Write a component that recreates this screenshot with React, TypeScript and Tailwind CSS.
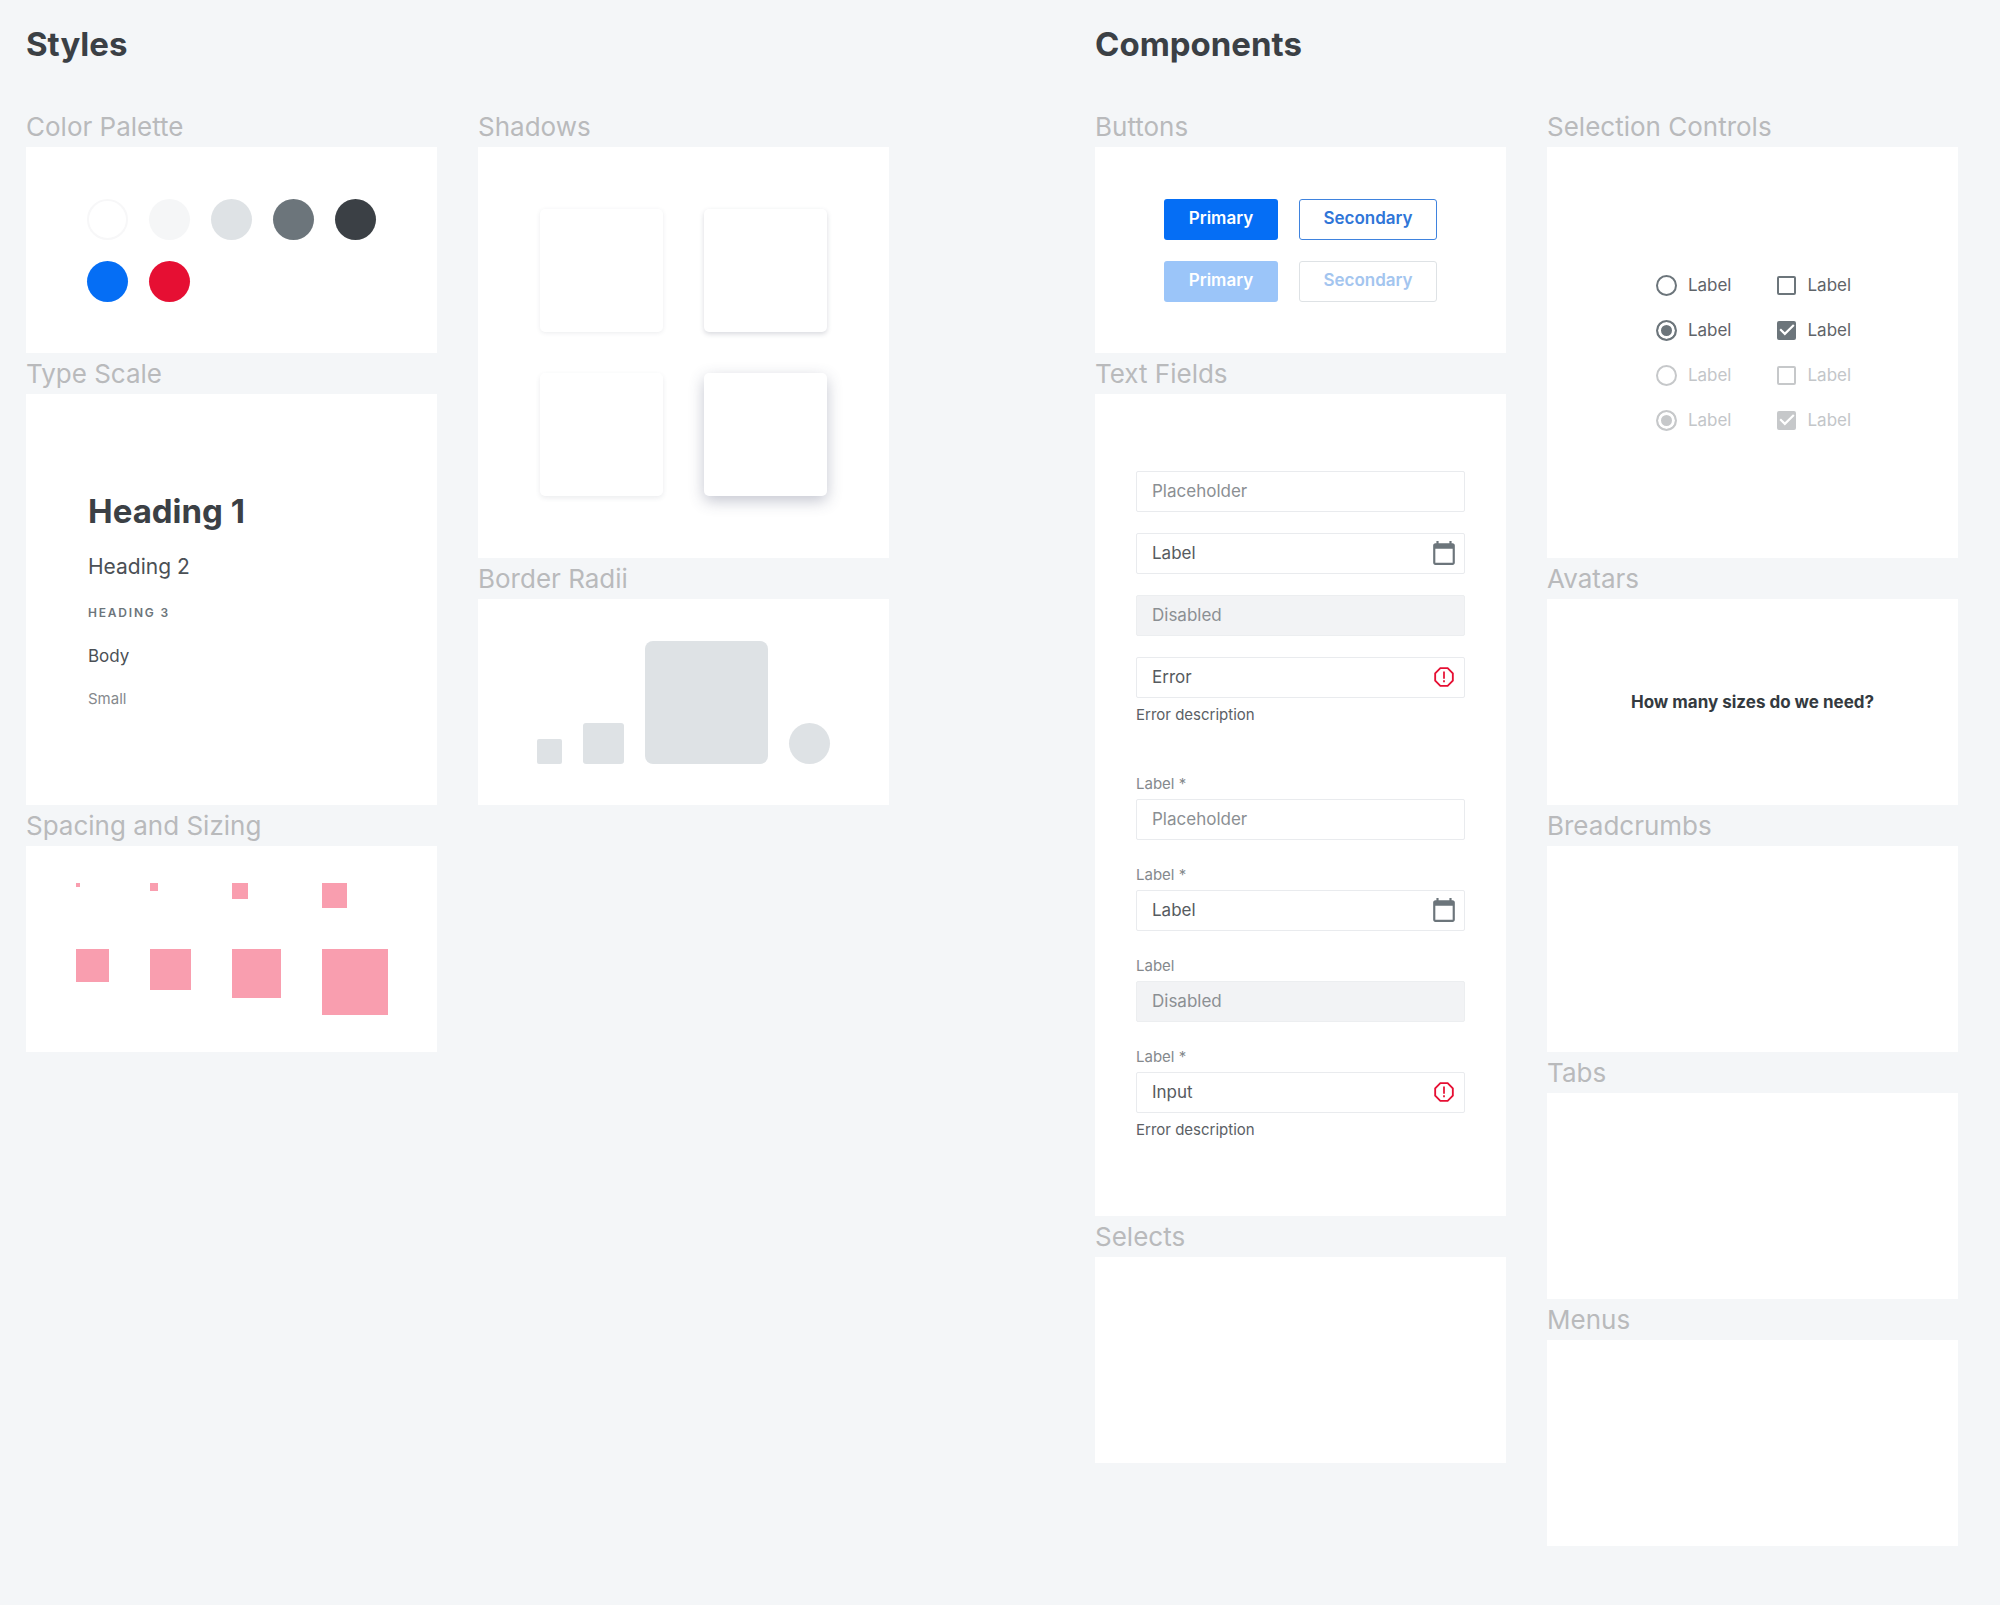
import React, { useId } from 'react';

type FieldProps = {
  name: string;
  label?: string;
  value?: string;
  placeholder?: string;
  disabled?: boolean;
  icon?: React.ReactNode;
  error?: string;
};

const swatches = [
  { name: 'White', className: 'bg-white border-2 border-[#f7f7f8]' },
  { name: 'Gray 100', className: 'bg-[#f5f6f7]' },
  { name: 'Gray 300', className: 'bg-[#dee2e5]' },
  { name: 'Gray 600', className: 'bg-[#6c757b]' },
  { name: 'Gray 800', className: 'bg-[#3b4045]' },
  { name: 'Blue', className: 'bg-[#056ef5]' },
  { name: 'Red', className: 'bg-[#e60f33]' },
];

const spacings = [
  'size-[4px]',
  'size-[8px]',
  'size-[16px]',
  'size-[25px]',
  'size-[33px]',
  'size-[41px]',
  'size-[49px]',
  'size-[66px]',
];

const shadows = [
  'shadow-[0_1px_4px_rgba(60,65,90,0.10)]',
  'shadow-[0_2px_5px_rgba(60,65,90,0.20)]',
  'shadow-[0_2px_5px_rgba(60,65,90,0.10)]',
  'shadow-[0_5px_15px_rgba(60,65,100,0.30)]',
];

const controls = [
  { checked: false, disabled: false },
  { checked: true, disabled: false },
  { checked: false, disabled: true },
  { checked: true, disabled: true },
];

const CalendarIcon = () => (
  <svg viewBox="0 0 24 24" className="size-[26px] fill-[#6c757b]" aria-hidden="true">
    <path d="M20 3h-1V1h-2v2H7V1H5v2H4c-1.1 0-2 .9-2 2v16c0 1.1.9 2 2 2h16c1.1 0 2-.9 2-2V5c0-1.1-.9-2-2-2zm0 18H4V8h16v13z" />
  </svg>
);

const ErrorIcon = () => (
  <svg viewBox="0 0 24 24" className="size-[26px] fill-[#e60f33]" aria-hidden="true">
    <path d="M15.73 3H8.27L3 8.27v7.46L8.27 21h7.46L21 15.73V8.27L15.73 3zM19.3 15L15 19.3H9L4.7 15V9L9 4.7h6L19.3 9v6z" />
    <path d="M11.2 7h1.6v6.5h-1.6zM11.2 15h1.6v1.8h-1.6z" />
  </svg>
);

const Panel: React.FC<{ title: string; className?: string; children?: React.ReactNode }> = ({
  title,
  className = 'min-h-[206px]',
  children,
}) => (
  <section>
    <h3 className="text-[26px] leading-[41px] text-[#b9babc]">{title}</h3>
    <div className={`flex items-center justify-center bg-white ${className}`}>{children}</div>
  </section>
);

const Field: React.FC<FieldProps> = ({ name, label, value, placeholder, disabled, icon, error }) => {
  const id = useId();

  return (
    <div>
      {label && (
        <label htmlFor={id} className="mb-[5px] block text-[15px] leading-5 text-[#85898d]">
          {label}
        </label>
      )}
      <div
        className={`flex h-[41px] items-center rounded-[2px] border pr-[7px] pl-[15px] ${
          disabled ? 'border-[#eceef0] bg-[#f2f3f5]' : 'border-[#e9ebee] bg-white'
        }`}
      >
        <input
          id={id}
          type="text"
          aria-label={label ? undefined : name}
          defaultValue={value}
          placeholder={placeholder}
          disabled={disabled}
          className="w-full min-w-0 flex-1 bg-transparent text-[17px] leading-6 text-[#565b60] outline-none placeholder:text-[#8b8f93] disabled:text-[#8b8f93]"
        />
        {icon}
      </div>
      {error && <p className="mt-[7px] text-[15px] leading-5 text-[#5b6065]">{error}</p>}
    </div>
  );
};

const Radio: React.FC<{ checked: boolean; disabled: boolean; group: string }> = ({ checked, disabled, group }) => (
  <label
    className={`flex h-6 items-center gap-2 text-[17px] leading-6 ${disabled ? 'text-[#c3c6c9]' : 'text-[#5f6469]'}`}
  >
    <span className="flex size-[26px] items-center justify-center">
      <input
        type="radio"
        name={group}
        defaultChecked={checked}
        disabled={disabled}
        className="size-[21px] appearance-none rounded-full border-2 border-[#6c757b] checked:bg-[#6c757b] checked:shadow-[inset_0_0_0_3px_#fff] disabled:border-[#c6c8ca] disabled:checked:bg-[#c6c8ca]"
      />
    </span>
    Label
  </label>
);

const Checkbox: React.FC<{ checked: boolean; disabled: boolean }> = ({ checked, disabled }) => (
  <label
    className={`flex h-6 items-center gap-2 text-[17px] leading-6 ${disabled ? 'text-[#c3c6c9]' : 'text-[#5f6469]'}`}
  >
    <span className="relative flex size-[26px] items-center justify-center">
      <input
        type="checkbox"
        defaultChecked={checked}
        disabled={disabled}
        className="peer size-[19px] appearance-none rounded-[2px] border-2 border-[#6c757b] checked:bg-[#6c757b] disabled:border-[#c6c8ca] disabled:checked:bg-[#c6c8ca]"
      />
      <svg
        viewBox="0 0 24 24"
        className="pointer-events-none absolute inset-0 hidden size-[26px] fill-white peer-checked:block"
        aria-hidden="true"
      >
        <path d="M10 17l-5-5 1.41-1.41L10 14.17l7.59-7.59L19 8l-9 9z" />
      </svg>
    </span>
    Label
  </label>
);

const Styles = () => (
  <section>
    <h2 className="mb-[42px] text-[33px] leading-10 font-bold text-[#3b4045]">Styles</h2>
    <div className="grid grid-cols-2 items-start gap-x-[41px]">
      <div>
        <Panel title="Color Palette">
          <ul className="grid grid-cols-[repeat(5,41px)] gap-[21px]">
            {swatches.map((s) => (
              <li key={s.name} aria-label={s.name} className={`size-[41px] rounded-full ${s.className}`} />
            ))}
          </ul>
        </Panel>
        <Panel title="Type Scale" className="min-h-[411px]">
          <div className="flex w-full flex-col gap-[21px] pl-[62px] text-[#4b5055]">
            <p className="text-[33px] leading-10 font-bold text-[#3b4045]">Heading 1</p>
            <p className="text-[21px] leading-[30px]">Heading 2</p>
            <p className="text-[12px] leading-5 font-semibold tracking-[0.15em] text-[#6c757b] uppercase">Heading 3</p>
            <p className="text-[17px] leading-6">Body</p>
            <p className="text-[15px] leading-5 text-[#85898d]">Small</p>
          </div>
        </Panel>
        <Panel title="Spacing and Sizing">
          <ul className="grid grid-cols-[repeat(4,auto)] gap-[41px]">
            {spacings.map((size) => (
              <li key={size} className={`bg-[#f99eaf] ${size}`} />
            ))}
          </ul>
        </Panel>
      </div>
      <div>
        <Panel title="Shadows" className="min-h-[411px]">
          <div className="grid grid-cols-2 gap-[41px]">
            {shadows.map((shadow) => (
              <div key={shadow} className={`size-[123px] rounded-[5px] bg-white ${shadow}`} />
            ))}
          </div>
        </Panel>
        <Panel title="Border Radii">
          <div className="flex items-end gap-[21px]">
            <div className="size-[25px] rounded-[2px] bg-[#dee2e5]" />
            <div className="size-[41px] rounded-[3px] bg-[#dee2e5]" />
            <div className="size-[123px] rounded-[8px] bg-[#dee2e5]" />
            <div className="size-[41px] rounded-full bg-[#dee2e5]" />
          </div>
        </Panel>
      </div>
    </div>
  </section>
);

const Components = () => (
  <section>
    <h2 className="mb-[42px] text-[33px] leading-10 font-bold text-[#3b4045]">Components</h2>
    <div className="grid grid-cols-2 items-start gap-x-[41px]">
      <div>
        <Panel title="Buttons">
          <div className="grid grid-cols-[114px_138px] gap-[21px] text-[17px] font-semibold">
            <button className="h-[41px] rounded-[3px] bg-[#056ef5] text-white">Primary</button>
            <button className="h-[41px] rounded-[3px] border border-[#3f83de] text-[#2f76d8]">Secondary</button>
            <button disabled className="h-[41px] rounded-[3px] bg-[#9bc5f9] text-white">
              Primary
            </button>
            <button disabled className="h-[41px] rounded-[3px] border border-[#dee2e5] text-[#a3c5ef]">
              Secondary
            </button>
          </div>
        </Panel>
        <Panel title="Text Fields" className="min-h-[822px]">
          <div className="w-full px-[41px]">
            <div className="flex flex-col gap-[21px]">
              <Field name="Placeholder" placeholder="Placeholder" />
              <Field name="Label" value="Label" icon={<CalendarIcon />} />
              <Field name="Disabled" value="Disabled" disabled />
              <Field name="Error" value="Error" icon={<ErrorIcon />} error="Error description" />
            </div>
            <div className="mt-[49px] flex flex-col gap-[25px]">
              <Field name="Placeholder" label="Label *" placeholder="Placeholder" />
              <Field name="Label" label="Label *" value="Label" icon={<CalendarIcon />} />
              <Field name="Disabled" label="Label" value="Disabled" disabled />
              <Field name="Input" label="Label *" value="Input" icon={<ErrorIcon />} error="Error description" />
            </div>
          </div>
        </Panel>
        <Panel title="Selects" />
      </div>
      <div>
        <Panel title="Selection Controls" className="min-h-[411px]">
          <div className="flex gap-[42px]">
            <div className="flex flex-col gap-[21px]">
              {controls.map((c, i) => (
                <Radio key={i} group={c.disabled ? 'radio-disabled' : 'radio'} {...c} />
              ))}
            </div>
            <div className="flex flex-col gap-[21px]">
              {controls.map((c, i) => (
                <Checkbox key={i} {...c} />
              ))}
            </div>
          </div>
        </Panel>
        <Panel title="Avatars">
          <p className="text-[17px] leading-6 font-bold text-[#343a40]">How many sizes do we need?</p>
        </Panel>
        <Panel title="Breadcrumbs" />
        <Panel title="Tabs" />
        <Panel title="Menus" />
      </div>
    </div>
  </section>
);

export default function App() {
  return (
    <main className="grid min-h-screen grid-cols-2 items-start gap-x-[206px] bg-[#f4f6f8] pt-6 pr-[42px] pb-[58px] pl-[26px] font-['Inter',sans-serif]">
      <Styles />
      <Components />
    </main>
  );
}
